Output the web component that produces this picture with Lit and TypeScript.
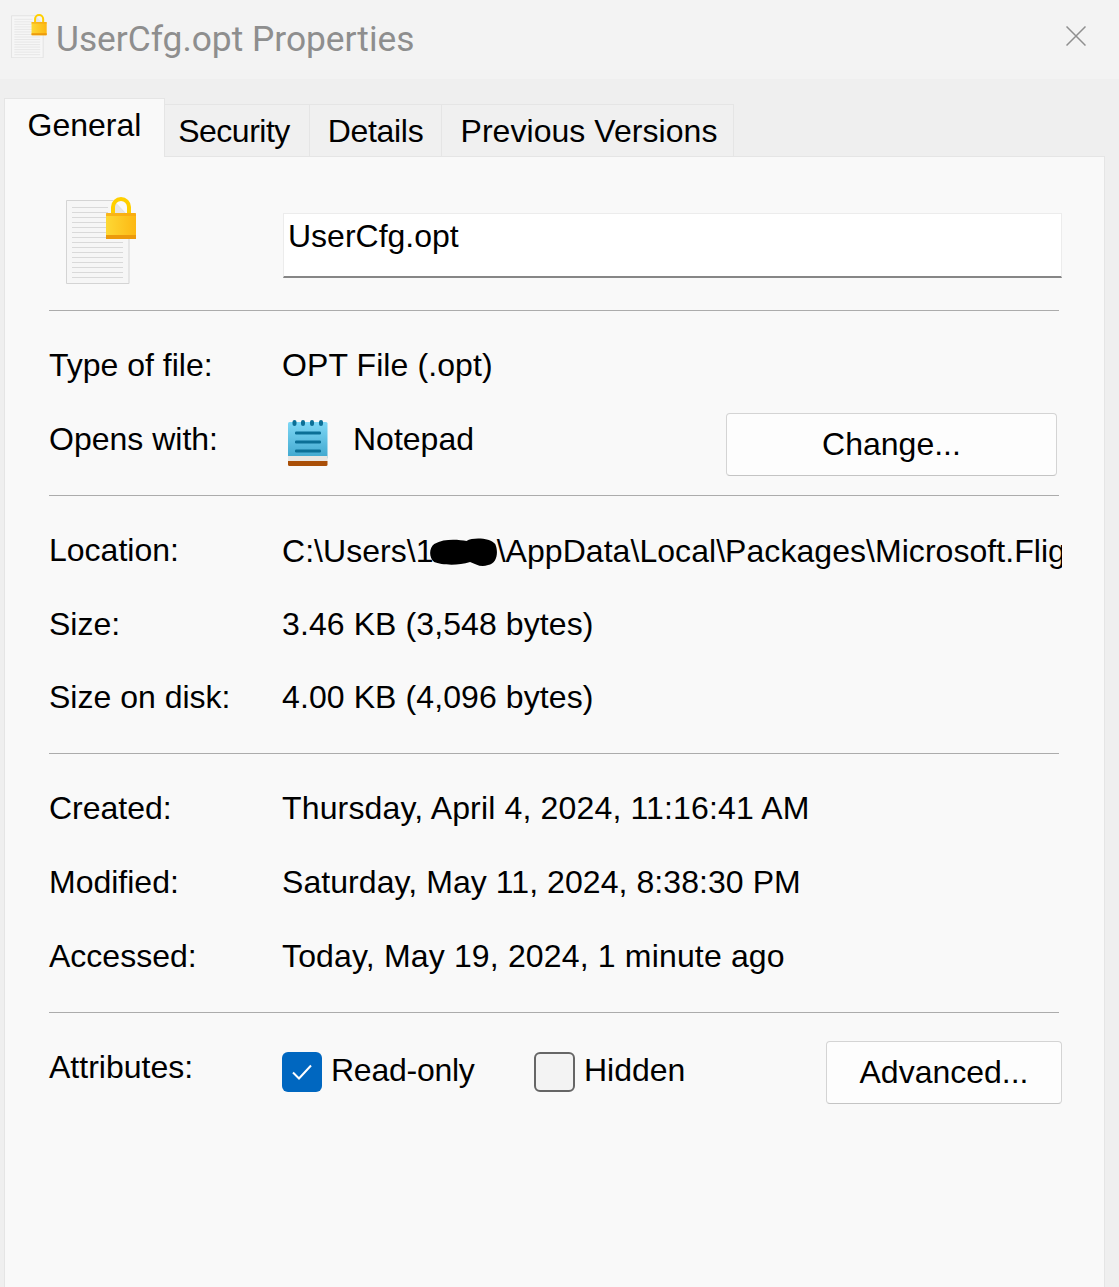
import { LitElement, html, css, svg } from "lit";
import { customElement } from "lit/decorators.js";

const docIcon = (w: number, h: number) => html`<svg width=${w} height=${h} viewBox="0 0 70 87">
  <defs>
    <linearGradient id="lk${w}" x1="0" x2="1" y1="0" y2="0"><stop offset="0" stop-color="#fdd835"/><stop offset="1" stop-color="#fdb813"/></linearGradient>
  </defs>
  <path d="M.5 3.5H47L63 20V86.5H.5Z" fill="#f6f6f6" stroke="#d4d4d4"/>
  <path d="M47 3.5V20H63Z" fill="#e6e6e6"/>
  <g stroke="#d9d9d9" stroke-width="1">
    ${[10,15,20,25,30,35,40,45,50,55,60,65,70,75,80].map((y) => svg`<line x1="6" x2=${y < 30 ? 42 : 57} y1=${y + 0.5} y2=${y + 0.5}></line>`)}
  </g>
  <path d="M47 18V10a8 8 0 0 1 16 0V18" fill="none" stroke="#ffcf00" stroke-width="4"/>
  <rect x="40" y="16" width="30" height="26" rx="1.5" fill="url(#lk${w})"/>
  <rect x="40" y="16" width="30" height="3" fill="#f7a70f" opacity=".7"/>
  <rect x="40" y="38" width="30" height="4" fill="#ec9a0c"/>
</svg>`;

const notepadIcon = html`<svg class="np" width="40" height="46" viewBox="0 0 40 46">
  <defs><linearGradient id="npg" x1="0" x2="0" y1="0" y2="1"><stop offset="0" stop-color="#7fd8f6"/><stop offset="1" stop-color="#3ea6cd"/></linearGradient></defs>
  <rect x="0" y="2" width="39.5" height="37" rx="1.5" fill="url(#npg)"/>
  <rect x="0" y="36" width="39.5" height="5" fill="#e9e6e2"/>
  <path d="M0 41H39.5V44.5a1.5 1.5 0 0 1-1.5 1.5H1.5A1.5 1.5 0 0 1 0 44.5Z" fill="#a94f08"/>
  <g fill="#0b6f96">
    ${[6.5, 15, 24, 33].map((x) => svg`<rect x=${x - 2} y="0" width="4" height="6" rx="2"></rect>`)}
    ${[11.5, 20.5, 29.5].map((y) => svg`<rect x="7" y=${y} width="26" height="3" rx="1.2"></rect>`)}
  </g>
</svg>`;

@customElement("app-root")
export class AppRoot extends LitElement {
  static styles = css`
    :host { display: block; min-height: 100vh; height: 1287px; overflow: hidden; background: #efefef;
      font-family: "Liberation Sans", Roboto, sans-serif; font-size: 32px; color: #000; }
    * { box-sizing: border-box; }
    .titlebar { height: 79px; background: #f3f3f3; display: flex; align-items: center; padding-left: 11px; position: relative; }
    .ico { display: flex; margin-top: -8px; }
    .title { font-size: 35.3px; color: #8e8e8e; margin-left: 9px; margin-top: -2px; white-space: nowrap; font-family: Roboto, sans-serif; }
    .close { margin-left: auto; margin-right: 33px; margin-top: -7px; }
    .tabs { height: 78px; display: flex; align-items: flex-end; padding-left: 4px; position: relative; z-index: 1; margin-bottom: -1px; }
    .tab { height: 53px; background: #f0f0f0; border: 1px solid #e5e5e5; border-left: 0; border-bottom: 1px solid #e5e5e5; display: flex; align-items: center; justify-content: center; line-height: 1; white-space: nowrap; }
    .tab.active { height: 59px; background: #f9f9f9; border: 1px solid #e5e5e5; border-bottom: 0; width: 161px; padding: 0 0 6px; }
    .w1 { width: 145px; letter-spacing: -0.5px; padding-right: 6px; } .w2 { width: 132px; letter-spacing: -0.3px; } .w3 { width: 292px; letter-spacing: 0.05px; padding-left: 3px; }
    .panel { margin-left: 4px; width: 1101px; height: 1131px; background: #f9f9f9; border: 1px solid #e5e5e5; border-bottom: 0; padding: 0 45px 0 44px; }
    .head { display: flex; height: 153px; position: relative; }
    .head .doc { margin: 40px 0 0 17px; }
    .name { position: absolute; left: 233.5px; right: -3px; top: 56px; height: 65px; background: #fff; border: 1px solid #ececec; border-bottom: 2px solid #868686; padding: 2px 4.5px; line-height: 40px; }
    hr { border: 0; height: 1px; background: #acacac; margin: 0; }
    .sec { padding: 18px 0; }
    .sec.s2 { padding: 17px 0 19px; }
    .sec.s3 { padding: 18px 0 18.5px; }
    .sec.s3 .row { height: 73.5px; }
    .sec.s4 { padding: 17px 0 19px; }
    .row { display: grid; grid-template-columns: 233px 1fr; height: 74px; align-items: center; white-space: nowrap; }
    .val { min-width: 0; letter-spacing: 0.1px; }
    .date { min-width: 0; letter-spacing: 0.16px; }
    .date.mod { letter-spacing: 0.07px; }
    .clip { overflow: hidden; margin-right: -3px; display: block; line-height: 44px; letter-spacing: 0.05px; }
    .blob { display: inline-block; width: 70px; height: 30px; vertical-align: -6px; margin: 0 0 0 -7px; position: relative; }
    .blob svg { position: absolute; left: 0; top: 0; }
    .open { display: flex; align-items: center; }
    .np { margin: 8px 0 0 6px; }
    .npname { margin-left: 25px; }
    button { font: inherit; color: #000; background: #fdfdfd; border: 1px solid #d4d4d4; border-bottom-color: #c4c4c4; border-radius: 4px; height: 63px; padding: 0; }
    .change { width: 331px; margin-left: auto; margin-right: 2px; margin-top: 10px; }
    .attr { display: flex; align-items: center; }
    .attr .label { width: 233px; margin-top: -2px; }
    .chk { width: 40px; height: 40px; border-radius: 6px; background: #0067c0; display: flex; align-items: center; justify-content: center; flex: none; margin-top: 4px; }
    .chk.off { width: 41px; background: #f3f3f3; border: 2px solid #666; }
    .cl { display: flex; align-items: center; gap: 9px; margin-top: 4px; }
    .c1 { width: 252px; letter-spacing: -0.25px; }
    .adv { width: 236px; margin-left: auto; margin-right: -3px; margin-top: 9px; }
  `;

  render() {
    return html`
      <div class="titlebar">
        <span class="ico">${docIcon(36, 44)}</span>
        <span class="title">UserCfg.opt Properties</span>
        <svg class="close" width="20" height="20" viewBox="0 0 20 20"><path d="M.5.5L19.5 19.5M19.5.5L.5 19.5" stroke="#8f8f8f" stroke-width="1.5" fill="none"/></svg>
      </div>
      <div class="tabs">
        <div class="tab active">General</div>
        <div class="tab w1">Security</div>
        <div class="tab w2">Details</div>
        <div class="tab w3">Previous Versions</div>
      </div>
      <div class="panel">
        <div class="head">
          <span class="doc">${docIcon(70, 87)}</span>
          <div class="name">UserCfg.opt</div>
        </div>
        <hr />
        <div class="sec s2">
          <div class="row"><span>Type of file:</span><span class="val">OPT File (.opt)</span></div>
          <div class="row"><span>Opens with:</span>
            <span class="open">${notepadIcon}<span class="npname">Notepad</span><button class="change">Change...</button></span>
          </div>
        </div>
        <hr />
        <div class="sec s3">
          <div class="row"><span>Location:</span><span class="clip">C:\\Users\\1<span class="blob"><svg width="70" height="30" viewBox="0 0 78 30" preserveAspectRatio="none"><path d="M8 6C20 0 36 2 44 3C52 -1 70 0 76 6C80 14 78 26 68 27C60 30 54 26 48 24C34 28 16 27 8 24C2 20 2 10 8 6Z" fill="#000"/></svg></span>\\AppData\\Local\\Packages\\Microsoft.FlightSimulator</span></div>
          <div class="row"><span>Size:</span><span class="val">3.46 KB (3,548 bytes)</span></div>
          <div class="row"><span>Size on disk:</span><span class="val">4.00 KB (4,096 bytes)</span></div>
        </div>
        <hr />
        <div class="sec s4">
          <div class="row"><span>Created:</span><span class="date">Thursday, April 4, 2024, 11:16:41 AM</span></div>
          <div class="row"><span>Modified:</span><span class="date mod">Saturday, May 11, 2024, 8:38:30 PM</span></div>
          <div class="row"><span>Accessed:</span><span class="date">Today, May 19, 2024, 1 minute ago</span></div>
        </div>
        <hr />
        <div class="sec">
          <div class="row attr">
            <span class="label">Attributes:</span>
            <span class="cl c1"><span class="chk"><svg width="22" height="18" viewBox="0 0 22 18"><path d="M2 9.5L8 15.5L20 2.5" fill="none" stroke="#fff" stroke-width="2"/></svg></span>Read-only</span>
            <span class="cl"><span class="chk off"></span>Hidden</span>
            <button class="adv">Advanced...</button>
          </div>
        </div>
      </div>
    `;
  }
}
